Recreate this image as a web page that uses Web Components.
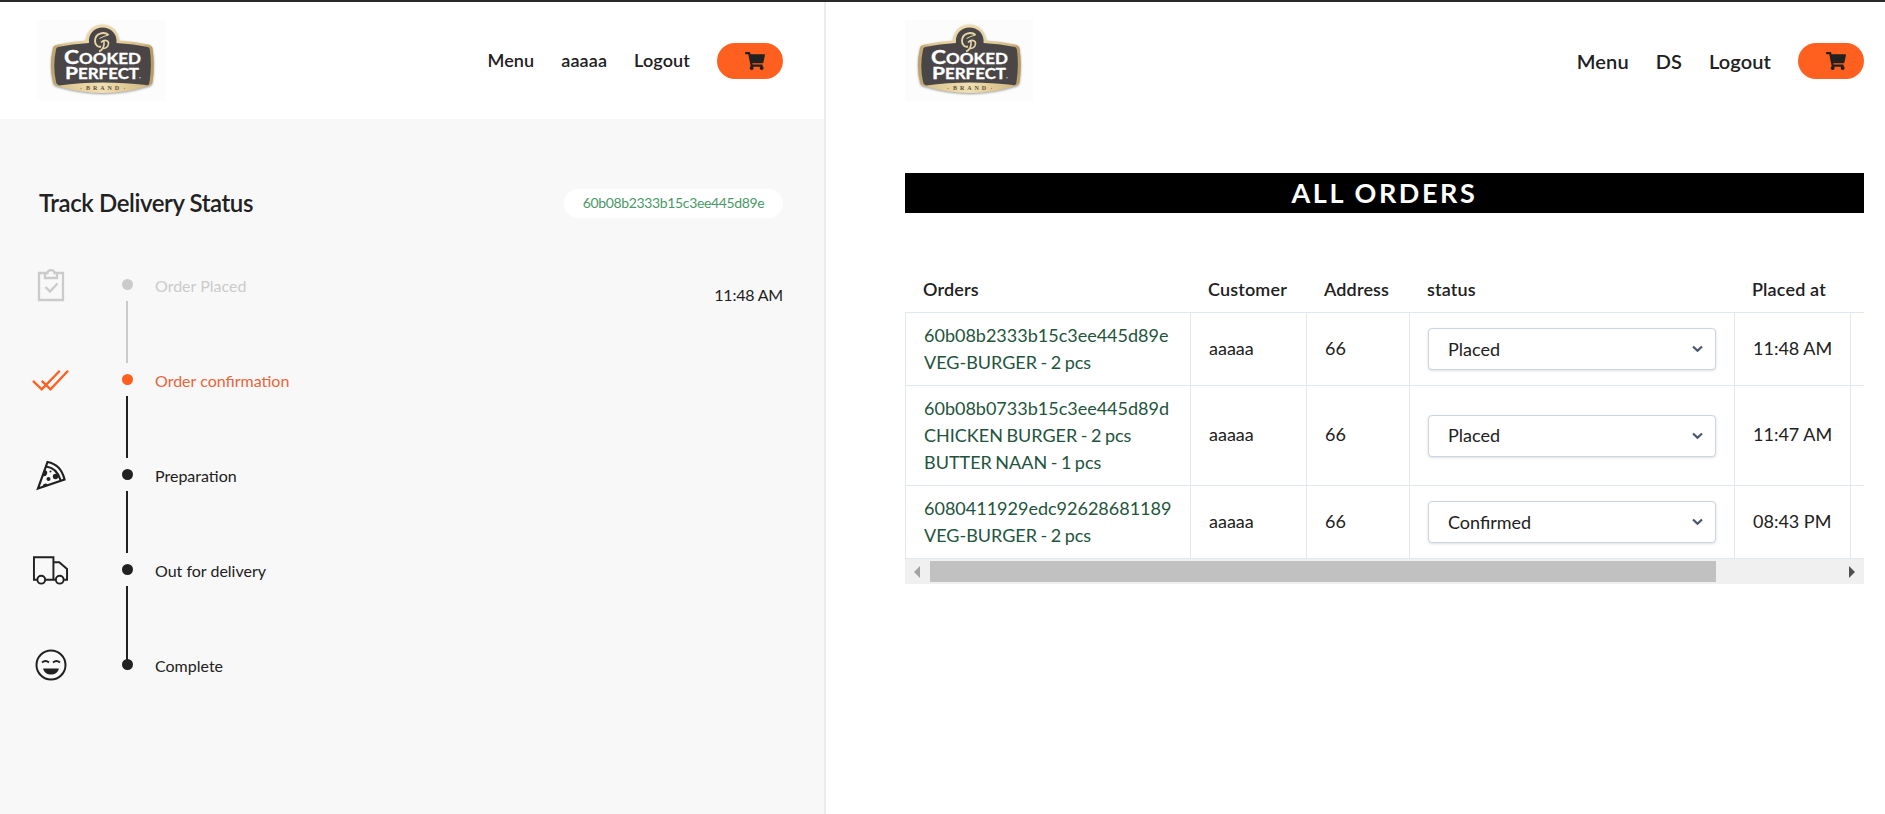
<!DOCTYPE html>
<html lang="en">
<head>
<meta charset="utf-8">
<title>Orders</title>
<style>
html,body{margin:0;height:100%}
body{font-family:Lato,"Open Sans",sans-serif;color:#212121;background:#fff;overflow:hidden}
</style>
</head>
<body>
<app-shell></app-shell>
<script>
const define = (name, html) => customElements.define(name, class extends HTMLElement {
  constructor() {
    super();
    this.attachShadow({ mode: 'open' }).innerHTML = typeof html === 'function' ? html(this) : html;
  }
});

define('brand-logo', `
<style>:host{display:block;width:128px;height:81px;background:#fcfcfc}svg{display:block}</style>
<svg width="128" height="81" viewBox="0 0 128 81">
  <defs>
    <linearGradient id="g" x1="0" x2="1"><stop offset="0" stop-color="#b89d62"/><stop offset=".12" stop-color="#d9c490"/><stop offset=".3" stop-color="#e6d3a0"/><stop offset=".5" stop-color="#efdfb4"/><stop offset=".7" stop-color="#e2cd98"/><stop offset=".9" stop-color="#d3bc84"/><stop offset="1" stop-color="#b3965a"/></linearGradient>
    <filter id="s" x="-10%" y="-10%" width="120%" height="125%"><feDropShadow dx="0" dy="1" stdDeviation="1.3" flood-color="#555" flood-opacity=".6"/></filter>
  </defs>
  <path filter="url(#s)" fill="url(#g)" d="M15 28C15 26 17 25 20 24.500Q34 21.500 48 20.500C49 11 55 4.500 64.500 4.500S80 11 81 20.500Q97 21.500 110 24.500Q114 25.500 114.500 28Q117 45 114.500 62Q114 65 110 66Q87 73 65 73T19 66Q15.500 65 15 62Q11 45 15 28Z"/>
  <path fill="#4a4647" d="M18 29.500Q18 27.500 20 27Q34 24 51 23C50 14 56 7.500 64.500 7.500S79.500 14 78.500 23Q96 24 110 27Q111.500 27.500 112 30Q114 46 111.500 62Q111 66 108 65Q88 62.500 65 62.500T21 65.500Q18.500 65 18 62Q14.500 46 18 29.500Z"/>
  <g fill="none" stroke="#e6d5a4">
    <path stroke-width="1.900" d="M70.500 15C66 11 57 13.500 57 21C57 25 60 27.500 63 26.500"/>
    <path stroke-width="1" d="M61.500 18.500Q66 16 70.500 15"/>
    <path stroke-width="1.600" d="M66 21C66.500 26 65 30 61 31.500M63 22.500C66 19 71 20 70.500 24C70 27.500 67 29 64.500 28"/>
  </g>
  <g fill="#fff" stroke="#fff" stroke-width=".3" font-family="Lato,sans-serif" font-weight="700">
    <text x="26" y="44.300" font-size="18" textLength="15" lengthAdjust="spacingAndGlyphs">C</text>
    <text x="41" y="44.300" font-size="14.500" textLength="62" lengthAdjust="spacingAndGlyphs">OOKED</text>
    <text x="27" y="58.500" font-size="17.500" textLength="13" lengthAdjust="spacingAndGlyphs">P</text>
    <text x="40" y="58.500" font-size="14.500" textLength="61" lengthAdjust="spacingAndGlyphs">ERFECT</text>
  </g>
  <circle cx="102" cy="57.700" r=".7" fill="#ddd"/>
  <text x="48" y="70.300" font-family="'Liberation Serif',serif" font-weight="700" font-size="6" fill="#5f5138" textLength="33">BRAND</text>
  <circle cx="43" cy="68.500" r=".7" fill="#b78c55"/><circle cx="86.500" cy="68.500" r=".7" fill="#b78c55"/>
</svg>`);

define('cart-button', `
<style>:host{display:flex;box-sizing:border-box;width:66px;height:36px;border-radius:18px;background:#ff5f1f;padding:9px 0 0 28px}</style>
<svg width="20" height="18" viewBox="0 0 576 512" preserveAspectRatio="none" fill="#212121"><path d="M528 301l47-208c4-15-8-29-23-29H159l-9-45C148 8 138 0 126 0H24C11 0 0 11 0 24v16c0 13 11 24 24 24h70l70 343c-17 10-28 28-28 49 0 31 25 56 56 56s56-25 56-56c0-16-6-30-17-40h210c-11 10-17 24-17 40 0 31 25 56 56 56s56-25 56-56c0-22-13-41-32-50l6-25c3-15-8-29-24-29H218l-7-32h294c11 0 21-8 23-19z"/></svg>`);

define('site-header', `
<style>
:host{display:flex;box-sizing:border-box;height:117px;background:#fff;justify-content:space-between;align-items:flex-start;padding:18px var(--edge-r) 0 var(--edge-l)}
nav{display:flex;align-items:center;gap:27px;height:36px;margin-top:23px;font-size:var(--nav);font-weight:600;letter-spacing:var(--nav-track,0)}
::slotted(span){padding-bottom:var(--lift,0)}
</style>
<brand-logo></brand-logo><nav><slot></slot><cart-button></cart-button></nav>`);

const icons = {
  placed: '<svg width="28" height="33" viewBox="0 0 28 33" fill="none" stroke="currentColor" stroke-width="2.300"><path d="M8 4H2v27h24V4h-6M8 4v5h12V4h-2.500a3.500 3 0 0 0-7 0z"/><path d="M8.500 18l4.500 4.500 7.500-8"/></svg>',
  confirmed: '<svg width="38" height="22" viewBox="0 0 38 22" fill="none" stroke="currentColor" stroke-width="2.400"><path d="M1 12l9 8.500L28.500 1.500M10 12l9 8.500L37 1.500"/></svg>',
  prep: '<svg width="32" height="32" viewBox="0 0 32 32" fill="none" stroke="currentColor" stroke-width="2.200"><path d="M12.500 3L3 29.500l26.500-9Q26 5.500 12.500 3z"/><path d="M11 7.500Q22 9 25.500 21"/><g fill="currentColor" stroke="none"><path d="M10 11a3 3 0 0 1-2 6zM8 28a2.500 2.500 0 0 1 5-1.500z"/><circle cx="13.500" cy="20" r="2"/><circle cx="20.500" cy="17.500" r="2.700"/><circle cx="15.500" cy="12.500" r="1"/></g></svg>',
  truck: '<svg width="38" height="30" viewBox="0 0 38 30" fill="none" stroke="currentColor" stroke-width="2"><path d="M5 25H2V2h20v23H14M22 7h6l8 7v11h-3M24 25h-2"/><circle cx="9.500" cy="25" r="4"/><circle cx="28.500" cy="25" r="4"/></svg>',
  done: '<svg width="32" height="32" viewBox="0 0 32 32" fill="none" stroke="currentColor" stroke-width="2"><circle cx="16" cy="16" r="14.500"/><path d="M7 13.500q3.500-3 7 0M18 13.500q3.500-3 7 0"/><path fill="currentColor" stroke="none" d="M8 19.500h16q-1.500 6-8 6t-8-6z"/></svg>'
};
define('track-step', el => `
<style>
:host{display:grid;grid-template-columns:90px 33px 1fr auto;height:95px;color:#212121}
:host([done]){color:#cbcbcb}:host([current]){color:#ff5f1f}
.icon{width:37px;height:38px;display:flex;align-items:center;justify-content:center}
.rail{display:flex;flex-direction:column;align-items:flex-start;padding-top:13px}
.dot{width:11px;height:11px;border-radius:50%;background:currentColor;flex:none}
.line{width:2px;height:62px;margin:11px 0 0 4px;background:#212121}
:host([done]) .line{background:#cbcbcb}
:host([join]) .line{height:74px}
:host([last]) .line{display:none}
.label{font-size:16px;line-height:24px;padding-top:8px}
:host([current]) .label{color:#e8643a}
time{font-size:16px;line-height:24px;padding-top:17px;color:#212121;letter-spacing:-.2px}
</style>
<div class="icon">${icons[el.getAttribute('icon')]}</div>
<div class="rail"><i class="dot"></i><i class="line"></i></div>
<div class="label"><slot></slot></div>${el.hasAttribute('time') ? `<time>${el.getAttribute('time')}</time>` : ''}`);

define('track-panel', `
<style>
:host{display:block;height:100%;background:#f8f8f8;border-right:2px solid #ececec;box-sizing:border-box;--edge-l:38px;--edge-r:41px;--nav:18px;--nav-track:.12px;--lift:2px}
.head{display:flex;justify-content:space-between;align-items:center;padding:68px 41px 0 39px}
h1{margin:0;font-size:24px;line-height:32px;font-weight:600;letter-spacing:-.42px}
.id{box-sizing:border-box;width:219px;height:29px;border-radius:15px;background:#fff;color:#4a9967;font-size:14px;line-height:28px;letter-spacing:-.35px;text-align:center}
.steps{padding:47px 41px 0 32px}
</style>
<site-header><span>Menu</span><span>aaaaa</span><span>Logout</span></site-header>
<div class="head"><h1>Track Delivery Status</h1><div class="id">60b08b2333b15c3ee445d89e</div></div>
<div class="steps">
<track-step icon="placed" done time="11:48 AM">Order Placed</track-step>
<track-step icon="confirmed" current>Order confirmation</track-step>
<track-step icon="prep">Preparation</track-step>
<track-step icon="truck" join>Out for delivery</track-step>
<track-step icon="done" last>Complete</track-step>
</div>`);

define('status-select', `
<style>
:host{display:flex;box-sizing:border-box;width:288px;height:42px;border:1px solid #cbd5e0;border-radius:4px;background:#fff;box-shadow:0 1px 3px rgba(0,0,0,.13);align-items:center;justify-content:space-between;padding:0 12px 0 19px}
</style><span><slot></slot></span>
<svg width="11" height="8" viewBox="0 0 11 8" fill="none" stroke="#4a5568" stroke-width="2.200"><path d="M1 1.500l4.500 4.300L10 1.500"/></svg>`);

define('order-row', el => `
<style>
:host{display:grid;grid-template-columns:var(--cols);border-bottom:1px solid #e2e8f0;border-left:1px solid #e2e8f0;font-size:18px;line-height:27px}
div{display:flex;align-items:center;padding:8px 0 10px 18px;border-right:1px solid #e2e8f0}
div:last-child{border:0;padding:0}
.items{display:block;padding:9px 0 9px 18px;color:#22543d;white-space:pre-line;word-spacing:-1.100px}
.sel{padding:9px 0 9px 18px}
</style>
<div class="items"><slot></slot></div><div>aaaaa</div><div>66</div>
<div class="sel"><status-select>${el.getAttribute('status')}</status-select></div><div>${el.getAttribute('time')}</div><div></div>`);

define('scroll-bar', `
<style>
:host{display:flex;height:25px;background:#f0f0f0;align-items:center;justify-content:space-between;padding:0 9px}
.thumb{width:786px;height:21px;background:#c1c1c1;margin-right:auto;margin-left:10px}
</style>
<svg width="6" height="12"><path d="M6 0v12L0 6z" fill="#a3a3a3"/></svg><div class="thumb"></div><svg width="6" height="12"><path d="M0 0v12l6-6z" fill="#505050"/></svg>`);

define('orders-panel', `
<style>
:host{display:block;height:100%;background:#fff;--edge-l:79px;--edge-r:21px;--nav:20px;--nav-track:.1px;
--cols:285px 116px 103px 325px 116px minmax(0,1fr)}
.body{margin:54px 21px 0 79px}
h2{margin:0;height:40px;background:#000;color:#fff;font-size:27px;line-height:40px;font-weight:700;letter-spacing:2.600px;text-align:center}
.th{display:grid;grid-template-columns:var(--cols);margin-top:60px;height:39px;font-size:18px;font-weight:600;line-height:32px;letter-spacing:.15px;border-bottom:1px solid #e2e8f0}
.th span{padding-left:18px}
</style>
<site-header><span>Menu</span><span>DS</span><span>Logout</span></site-header>
<div class="body"><h2>ALL ORDERS</h2>
<div class="th"><span>Orders</span><span>Customer</span><span>Address</span><span>status</span><span>Placed at</span></div>
<order-row status="Placed" time="11:48 AM">60b08b2333b15c3ee445d89e
VEG-BURGER - 2 pcs</order-row>
<order-row status="Placed" time="11:47 AM">60b08b0733b15c3ee445d89d
CHICKEN BURGER - 2 pcs
BUTTER NAAN - 1 pcs</order-row>
<order-row status="Confirmed" time="08:43 PM">6080411929edc92628681189
VEG-BURGER - 2 pcs</order-row>
<scroll-bar></scroll-bar></div>`);

define('app-shell', `
<style>:host{display:grid;grid-template-columns:826px minmax(0,1fr);height:814px;box-sizing:border-box;border-top:2px solid #2b292b}</style>
<track-panel></track-panel><orders-panel></orders-panel>`);
</script>
</body>
</html>
